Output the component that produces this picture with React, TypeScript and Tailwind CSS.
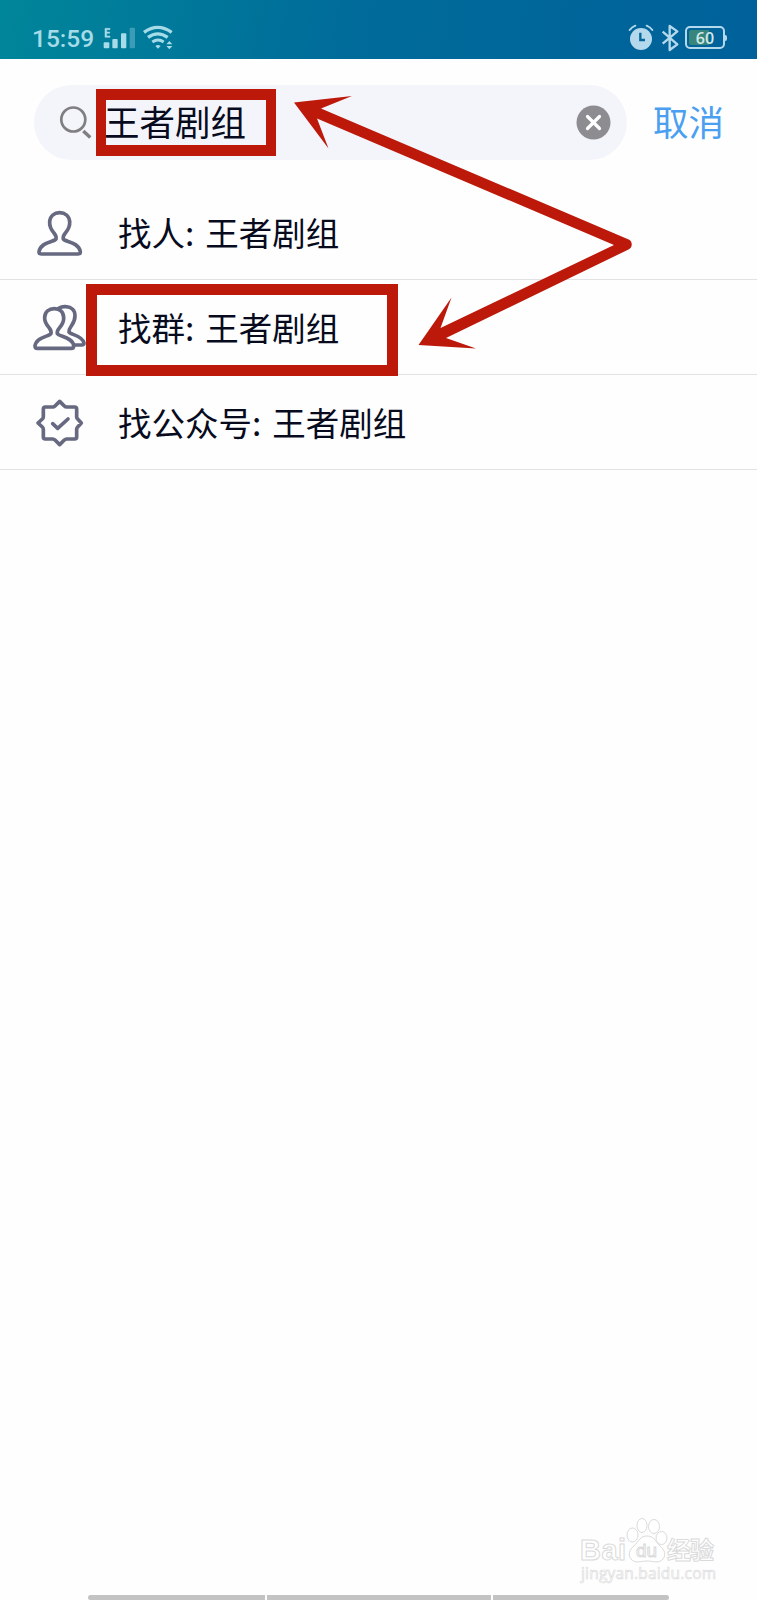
import type { ReactNode } from "react";

const QUERY = "王者剧组";

function SignalIcon() {
  return (
    <svg className="ml-[9px] h-[24px] w-[33px]" viewBox="309 77 99 72" fill="#a6dbe8">
      <path d="M315 84h15v4h-10v7h9v4h-9v8h10v4h-15z" stroke="#a6dbe8" strokeWidth="1.5" />
      <rect x="311" y="126" width="17" height="18" rx="3" />
      <rect x="337" y="116" width="16" height="28" rx="3" />
      <rect x="363" y="99" width="16" height="45" rx="3" />
      <rect x="389" y="82" width="16" height="62" rx="3" opacity="0.35" />
    </svg>
  );
}

function WifiIcon() {
  return (
    <svg className="ml-[6px] h-[26px] w-[32px]" viewBox="426 77 96 78" fill="none" stroke="#a6dbe8">
      <path d="M432 99q41-30 83 0" strokeWidth="10" />
      <path d="M444 114q29-21 59 0" strokeWidth="10" />
      <path d="M457 128q17-12 34 0" strokeWidth="9" />
      <path d="M466 140q8-6 16 0l-8 8z" fill="#a6dbe8" stroke="none" />
      <path d="M499 135l9-10 9 10zM499 140l9 10 9-10z" fill="#a6dbe8" stroke="none" />
    </svg>
  );
}

function AlarmIcon() {
  return (
    <svg className="h-[28px] w-[26px]" viewBox="232 72 78 84" fill="none" stroke="#b5d9ec">
      <circle cx="271" cy="117" r="33" fill="#b5d9ec" stroke="none" />
      <path d="M237 90q7-9 17-13M305 90q-7-9-17-13" strokeWidth="6" strokeLinecap="round" />
      <path d="M269 98v22h14" stroke="#06659a" strokeWidth="7" />
    </svg>
  );
}

function BluetoothIcon() {
  return (
    <svg className="ml-[2px] h-[28px] w-[18px]" viewBox="332 72 54 84" fill="none" stroke="#b5d9ec" strokeWidth="7">
      <path d="M337 95l44 38-23 17V78l23 16-44 37" strokeLinejoin="round" />
    </svg>
  );
}

function Battery() {
  return (
    <div className="ml-[6px] flex items-center">
      <div className="flex h-[23px] w-[40px] rounded-[5px] border-2 border-[#b5d9ec] p-[2px]">
        <div className="flex h-full w-full items-center justify-center rounded-[2px] bg-[linear-gradient(90deg,#37857b_62%,transparent_62%)] font-['Open_Sans',sans-serif] text-[16px] leading-none font-semibold text-[#d3e9e8]">
          60
        </div>
      </div>
      <div className="h-[6px] w-[2px] rounded-r-sm bg-[#b5d9ec]" />
    </div>
  );
}

function StatusBar() {
  return (
    <div className="flex h-[59px] items-center bg-[linear-gradient(100deg,#00869a_0%,#006c9a_45%,#00619a_100%)] pt-[16px] pr-[30px] pl-[32px]">
      <span className="mt-[3px] font-[Roboto,sans-serif] text-[24.5px] leading-none font-medium text-[#a6dbe8]">
        15:59
      </span>
      <SignalIcon />
      <WifiIcon />
      <div className="flex-1" />
      <AlarmIcon />
      <div className="w-[5px]" />
      <BluetoothIcon />
      <Battery />
    </div>
  );
}

function SearchBar() {
  return (
    <div className="flex h-[101px] items-end pl-[34px]">
      <div className="flex h-[75px] w-[593px] items-center rounded-full bg-[#f4f5fa] pr-[16px] pl-[25px]">
        <svg className="h-[34px] w-[34px]" viewBox="0 0 34 34" fill="none" stroke="#7f7f81">
          <circle cx="14.3" cy="13.5" r="12" strokeWidth="2.7" />
          <path d="M24.3 25l7 6.5" strokeWidth="3.4" />
        </svg>
        <span className="ml-[11px] flex-1 pb-[3px] text-[35.5px] leading-none text-[#070b1d]">{QUERY}</span>
        <svg className="mb-px h-[35px] w-[35px]" viewBox="0 0 35 35">
          <circle cx="17.5" cy="17.5" r="17" fill="#8d8c91" />
          <path d="M11.5 11.5l12 12M23.5 11.5l-12 12" stroke="#fff" strokeWidth="3.2" strokeLinecap="round" />
        </svg>
      </div>
      <span className="ml-[26px] flex h-[75px] items-center pb-[3px] text-[35.5px] leading-none text-[#4b9ff0]">
        取消
      </span>
    </div>
  );
}

function RowIcon({ viewBox, children }: { viewBox: string; children: ReactNode }) {
  return (
    <svg
      className="h-[54px] w-[54px] shrink-0"
      viewBox={viewBox}
      fill="none"
      stroke="#666980"
      strokeWidth="11"
      strokeLinecap="round"
      strokeLinejoin="round"
    >
      {children}
    </svg>
  );
}

const rows = [
  {
    label: "找人",
    icon: (
      <RowIcon viewBox="96 75 162 162">
        <path d="M168 177c2-9-2-13-7-19c-8-10-13-20-12-32c1-18 14-28 30-28s29 10 30 28c1 12-4 22-12 32c-5 6-9 10-7 19c5 9 45 8 51 38q0 7-7 7H124q-7 0-7-7c6-30 46-29 51-38z" />
      </RowIcon>
    ),
  },
  {
    label: "找群",
    icon: (
      <RowIcon viewBox="96 360 162 162">
        <path d="M153 461c2-9-1-12-6-18c-8-10-14-20-13-31c1-17 13-26 29-26s27 9 28 26c1 11-4 21-12 31c-5 6-9 9-7 18c5 9 46 10 49 36q0 8-7 8H112q-7 0-7-8c6-28 43-27 48-36z" />
        <path d="M176 385c8-5 15-6 22-5c17 1 27 11 27 27c0 12-4 21-11 31c-5 7-8 10-7 18c5 9 39 9 45 33q0 6-7 6h-22" />
      </RowIcon>
    ),
  },
  {
    label: "找公众号",
    icon: (
      <RowIcon viewBox="96 643 162 162">
        <path d="M179 662l14 14q3 3 7 3h24q6 0 6 6v23q0 4 3 7l11 12-11 12q-3 3-3 7v23q0 6-6 6h-24q-4 0-7 3l-14 14-14-14q-3-3-7-3h-22q-6 0-6-6v-23q0-4-3-7l-13-12 13-12q3-3 3-7v-23q0-6 6-6h22q4 0 7-3z" />
        <path d="M158 729l15 14 31-28" />
      </RowIcon>
    ),
  },
];

function ResultList() {
  return (
    <div className="mt-[25px]">
      {rows.map((row) => (
        <div
          key={row.label}
          className="flex h-[95px] items-center gap-8 border-b border-[#e2e2e4] pl-8 text-[33.5px] leading-none text-[#070b1d]"
        >
          {row.icon}
          <span className="pb-px whitespace-pre [word-spacing:3.5px]">
            {row.label}: {QUERY}
          </span>
        </div>
      ))}
    </div>
  );
}

function Annotations() {
  return (
    <>
      <div className="absolute top-[89px] left-[96px] h-[67px] w-[180px] border-x-[10px] border-y-[11px] border-[#bc190b]" />
      <div className="absolute top-[284px] left-[86px] h-[92px] w-[312px] border-[11px] border-[#bc190b]" />
      <svg className="absolute top-[90px] left-[290px] h-[265px] w-[350px]" viewBox="290 90 350 265" fill="#bc190b">
        <path d="M294 102.5L352 96L321 108.5L627.5 239A5.6 5.6 0 0 1 628.5 249.5L446 338L476 348.5L418.5 345L451.5 297.5L440.5 328L614 245L317 118.5L328.5 148.5Z" />
      </svg>
    </>
  );
}

function Watermark() {
  return (
    <svg
      className="absolute top-[1512px] left-[575px] h-[76px] w-[150px]"
      viewBox="575 1512 150 76"
      fill="#fff"
      stroke="#dadada"
      strokeWidth="1"
    >
      <text x="580" y="1560" fontSize="29" textLength="46" fontFamily="Liberation Sans, sans-serif" fontWeight="bold">
        Bai
      </text>
      <ellipse cx="632.5" cy="1535" rx="5.5" ry="7" />
      <ellipse cx="642" cy="1525.5" rx="5" ry="7" />
      <ellipse cx="654" cy="1526.5" rx="5.5" ry="7" />
      <ellipse cx="661.5" cy="1538" rx="5.5" ry="6.5" />
      <path d="M647 1536c7 0 8 5 13 10c5 4 6 9 3 13c-4 5-10 2-16 2s-12 3-16-2c-3-4-2-9 3-13c5-5 6-10 13-10z" />
      <text x="636" y="1557" fontSize="19" textLength="21" fontFamily="Liberation Sans, sans-serif">
        du
      </text>
      <text x="667" y="1559" fontSize="24" textLength="47" fontFamily="Noto Sans CJK SC, sans-serif" fontWeight="bold">
        经验
      </text>
      <text x="581" y="1579" fontSize="15.5" textLength="135" fontFamily="Open Sans, sans-serif" strokeWidth="0.6">
        jingyan.baidu.com
      </text>
    </svg>
  );
}

export default function App() {
  return (
    <div className="relative flex h-[1600px] w-[757px] flex-col overflow-hidden bg-[#fefefe] font-['Noto_Sans_CJK_SC',sans-serif]">
      <StatusBar />
      <SearchBar />
      <ResultList />
      <div className="flex-1" />
      {/* Navigation hint strips */}
      <div className="flex h-[5px] gap-[2px] pl-[88px]">
        <div className="w-[177px] rounded-l-full bg-[#c3c3c3]" />
        <div className="w-[224px] bg-[#c3c3c3]" />
        <div className="w-[176px] rounded-r-full bg-[#c3c3c3]" />
      </div>
      <Annotations />
      <Watermark />
    </div>
  );
}
